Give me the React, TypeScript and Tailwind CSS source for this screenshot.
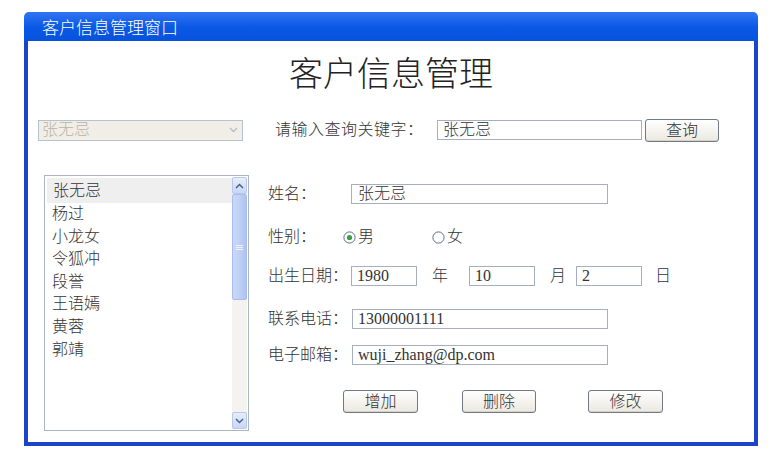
import React from "react";

const FONT = '"Liberation Serif", "Noto Sans CJK SC", serif';

function Input({ value, w, className = "" }: { value: string; w: string; className?: string }) {
  return (
    <div
      className={`${w} h-[20px] border border-[#a4b0bf] bg-white pl-[5px] text-[16px] leading-[18px] text-[#333] ${className}`}
    >
      {value}
    </div>
  );
}

function Btn({ label, w }: { label: string; w: string }) {
  return (
    <div
      className={`${w} h-[23px] rounded-[3px] border border-[#6f7a86] bg-gradient-to-b from-white to-[#ebe8e0] text-center text-[16px] leading-[21px] text-[#333] shadow-[inset_0_-1px_0_#d6d2c6]`}
    >
      {label}
    </div>
  );
}

function Radio({ checked }: { checked: boolean }) {
  return (
    <svg width="13" height="13" viewBox="0 0 13 13" className="shrink-0">
      <circle cx="6.5" cy="6.5" r="5.6" fill="#fff" stroke="#5b6f8a" strokeWidth="1" />
      {checked && <circle cx="6.5" cy="6.5" r="2.6" fill="#3f9c45" />}
    </svg>
  );
}

export default function App() {
  const names = ["杨过", "小龙女", "令狐冲", "段誉", "王语嫣", "黄蓉", "郭靖"];
  return (
    <div className="w-[778px] h-[456px] bg-white font-light" style={{ fontFamily: FONT }}>
      <div className="flex">
        <div className="ml-[24px] mt-[12px] flex h-[434px] w-[734px] flex-col">
          {/* title bar */}
          <div className="flex h-[29px] items-center rounded-t-[5px] bg-gradient-to-b from-[#2f74f2] via-[#0a5ae6] to-[#0652dc] pl-[18px] text-[17px] text-white">
            <span style={{ fontFamily: '"Noto Sans CJK SC", sans-serif' }} className="leading-[20px]">
              客户信息管理窗口
            </span>
          </div>
          {/* body */}
          <div className="flex flex-1 flex-col border-x-4 border-b-4 border-[#1b45c6] bg-white">
            <div className="mt-[14px] h-[40px] text-center text-[34px] leading-[40px] text-[#222]">
              客户信息管理
            </div>
            {/* search row */}
            <div className="mt-[23px] flex h-[24px] items-center">
              <div className="ml-[10px] flex h-[21px] w-[205px] items-center justify-between border border-[#b6c2cf] bg-[#f1eee7] pl-[3px] pr-[2px]">
                <span className="text-[16px] leading-[18px] text-[#b9b3a8]">张无忌</span>
                <div className="flex h-[15px] w-[14px] items-center justify-center">
                  <svg width="9" height="6" viewBox="0 0 9 6">
                    <path d="M1 1 L4.5 4.5 L8 1" fill="none" stroke="#b7bcc6" strokeWidth="1.3" />
                  </svg>
                </div>
              </div>
              <div className="ml-[32px] w-[162px] text-[16px] leading-[20px] tracking-[0.5px] text-[#333]">请输入查询关键字：</div>
              <Input value="张无忌" w="w-[205px]" />
              <div className="ml-[3px]">
                <Btn label="查询" w="w-[74px]" />
              </div>
            </div>
            {/* main */}
            <div className="mt-[33px] flex">
              {/* list */}
              <div className="ml-[16px] flex h-[256px] w-[205px] border border-[#aab6c4] bg-white">
                <div className="flex flex-1 flex-col pl-[2px] pt-[2px] text-[16px] text-[#333]">
                  <div className="h-[25px] bg-[#efefef] pl-[6px] leading-[25px]">张无忌</div>
                  {names.map((n) => (
                    <div key={n} className="h-[22.6px] pl-[5px] leading-[22.6px]">
                      {n}
                    </div>
                  ))}
                </div>
                {/* scrollbar */}
                <div className="my-[1px] mr-[1px] flex w-[15px] flex-col bg-[#f5f3ef]">
                  <div className="flex h-[17px] items-center justify-center rounded-[2px] border border-[#b9c8ea] bg-gradient-to-b from-[#e6eefc] to-[#c8d7f6]">
                    <svg width="9" height="6" viewBox="0 0 9 6">
                      <path d="M1 5 L4.5 1.5 L8 5" fill="none" stroke="#4d6185" strokeWidth="1.5" />
                    </svg>
                  </div>
                  <div className="relative h-[106px] rounded-[2px] border border-[#a9bcea] bg-gradient-to-r from-[#c9d8fb] via-[#bfd0f7] to-[#aec3f0]">
                    <div className="absolute left-[3px] top-[50px] flex w-[7px] flex-col gap-[1px]">
                      <div className="h-[1px] bg-[#eef3ff]" />
                      <div className="h-[1px] bg-[#eef3ff]" />
                      <div className="h-[1px] bg-[#eef3ff]" />
                    </div>
                  </div>
                  <div className="flex-1" />
                  <div className="flex h-[17px] items-center justify-center rounded-[2px] border border-[#b9c8ea] bg-gradient-to-b from-[#e6eefc] to-[#c8d7f6]">
                    <svg width="9" height="6" viewBox="0 0 9 6">
                      <path d="M1 1 L4.5 4.5 L8 1" fill="none" stroke="#4d6185" strokeWidth="1.5" />
                    </svg>
                  </div>
                </div>
              </div>
              {/* form */}
              <div className="ml-[19px] flex flex-col text-[16px] text-[#333]">
                <div className="mt-[9px] flex h-[20px] items-center">
                  <div className="w-[83px]">姓名：</div>
                  <Input value="张无忌" w="w-[257px]" className="pl-[6px]" />
                </div>
                <div className="mt-[23px] flex h-[20px] items-center">
                  <div className="w-[75px]">性别：</div>
                  <Radio checked />
                  <span className="ml-[2px]">男</span>
                  <div className="ml-[58px]">
                    <Radio checked={false} />
                  </div>
                  <span className="ml-[2px]">女</span>
                </div>
                <div className="mt-[19px] flex h-[20px] items-center">
                  <div className="w-[83px]">出生日期：</div>
                  <Input value="1980" w="w-[66px]" className="pl-[3px]" />
                  <span className="ml-[15px]">年</span>
                  <Input value="10" w="w-[66px]" className="ml-[21px] pl-[5px]" />
                  <span className="ml-[15px]">月</span>
                  <Input value="2" w="w-[66px]" className="ml-[10px] pl-[5px]" />
                  <span className="ml-[13px]">日</span>
                </div>
                <div className="mt-[23px] flex h-[20px] items-center">
                  <div className="w-[84px]">联系电话：</div>
                  <Input value="13000001111" w="w-[256px]" className="pl-[3px]" />
                </div>
                <div className="mt-[16px] flex h-[20px] items-center">
                  <div className="w-[84px]">电子邮箱：</div>
                  <Input value="wuji_zhang@dp.com" w="w-[256px]" className="pl-[3px]" />
                </div>
                <div className="mt-[25px] flex items-center">
                  <div className="ml-[75px]">
                    <Btn label="增加" w="w-[75px]" />
                  </div>
                  <div className="ml-[44px]">
                    <Btn label="删除" w="w-[74px]" />
                  </div>
                  <div className="ml-[52px]">
                    <Btn label="修改" w="w-[75px]" />
                  </div>
                </div>
              </div>
            </div>
          </div>
        </div>
      </div>
    </div>
  );
}
